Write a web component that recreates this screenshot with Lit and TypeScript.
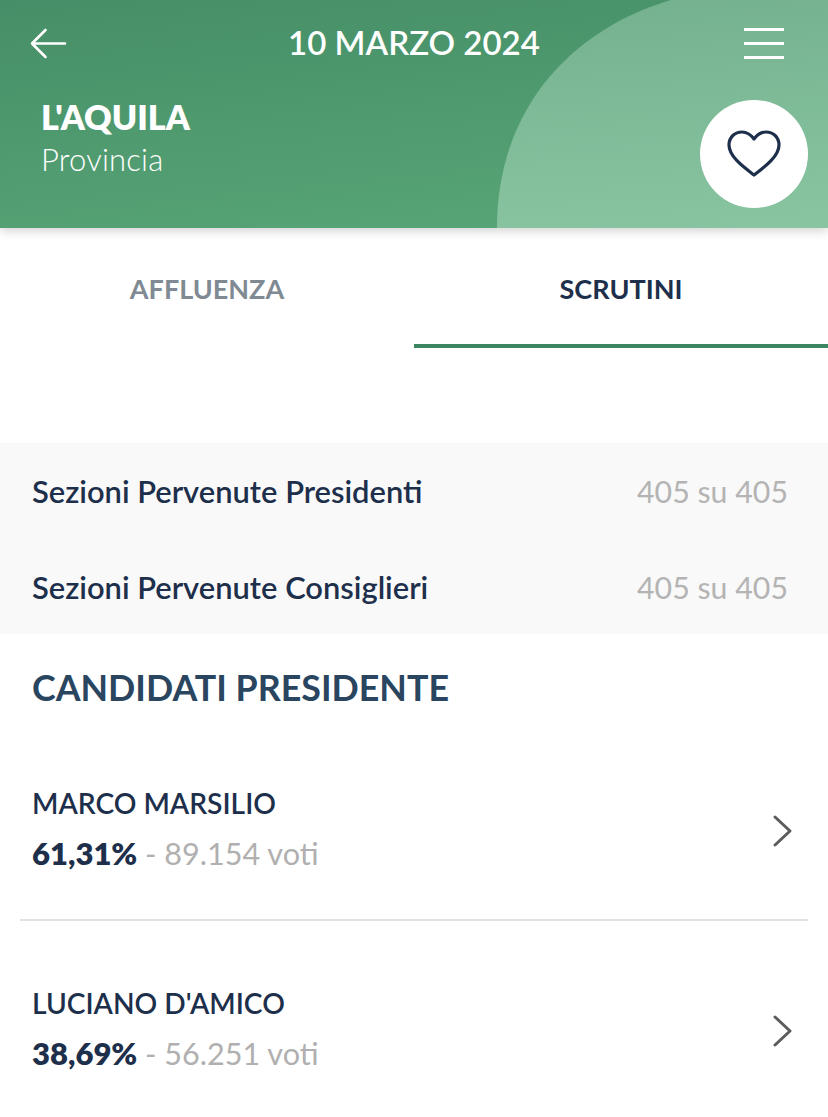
import { LitElement, html, css } from "lit";
import { customElement } from "lit/decorators.js";

const candidates = [
  { name: "MARCO MARSILIO", pct: "61,31%", votes: "89.154 voti" },
  { name: "LUCIANO D'AMICO", pct: "38,69%", votes: "56.251 voti" },
];

@customElement("app-root")
export class AppRoot extends LitElement {
  static styles = css`
    :host { display: block; width: 828px; height: 1117px; overflow: hidden; background: #fff; font-family: "Lato", "Noto Sans", sans-serif; color: #1d2f4b; }
    .header { position: relative; height: 228px; background: linear-gradient(174deg, #468e67, #59a778); box-shadow: 0 3px 10px rgba(0,0,0,.18); color: #fff; overflow: hidden; box-sizing: border-box; padding: 20px 44px 0 44px; }
    .blob { position: absolute; inset: 0; width: 828px; height: 228px; }
    .top { position: relative; display: grid; grid-template-columns: 1fr auto 1fr; align-items: center; height: 46px; }
    .back { width: 37px; height: 31px; display: block; margin-left: -14px; }
    .date { font-size: 33px; font-weight: 600; line-height: 46px; white-space: nowrap; margin-top: -2px; }
    .menu { justify-self: end; width: 40px; height: 31px; display: flex; flex-direction: column; justify-content: space-between; }
    .menu i { display: block; height: 3px; background: #fff; }
    .place { position: relative; margin: 30px 0 0 -3px; }
    .place b { display: block; font-size: 34px; line-height: 42px; font-weight: 800; }
    .place span { display: block; font-size: 31px; line-height: 42px; font-weight: 300; letter-spacing: .2px; }
    .fav { position: absolute; left: 700px; top: 100px; width: 108px; height: 108px; border-radius: 50%; background: #fff; display: flex; align-items: center; justify-content: center; }
    .fav svg { width: 54px; height: 48px; display: block; }
    .tabs { display: grid; grid-template-columns: 1fr 1fr; height: 120px; }
    .tab { display: flex; align-items: center; justify-content: center; font-size: 27px; font-weight: 700; color: #808a93; box-sizing: border-box; padding-top: 4px; border-bottom: 4px solid transparent; }
    .tab.on { color: #1d2f4b; border-bottom-color: #3b8560; }
    .info { margin-top: 95px; background: #f9f9f9; height: 191px; box-sizing: border-box; padding: 0 40px 0 32px; }
    .row { display: flex; justify-content: space-between; align-items: center; height: 96px; font-size: 30.9px; font-weight: 600; color: #1d2f4b; }
    .row span { font-size: 30.3px; font-weight: 400; color: #b4b4b4; }
    h2 { margin: 0; padding: 34px 32px 13px; font-size: 35.8px; font-weight: 700; line-height: 40px; color: #2a4560; white-space: nowrap; }
    .cand { display: flex; align-items: center; justify-content: space-between; margin: 0 20px; padding: 57px 14px 40px 12px; border-bottom: 2px solid #e2e2e2; }
    .cand:last-child { border-bottom: 0; }
    .n { display: block; font-size: 28.2px; line-height: 50px; font-weight: 600; color: #1d2f4b; }
    .v { display: block; font-size: 30.6px; line-height: 50px; color: #b0b0b0; }
    .v b { font-weight: 800; color: #1d2f4b; font-size: 31px; }
    .chev { width: 22px; height: 34px; display: block; margin-top: 4px; }
  `;

  render() {
    return html`
      <div class="header">
        <svg class="blob" viewBox="0 0 828 228">
          <defs>
            <linearGradient id="b" x1="0" y1="0" x2="0" y2="1">
              <stop offset="0" stop-color="#d0f1dd" stop-opacity=".32"></stop>
              <stop offset="1" stop-color="#d0f1dd" stop-opacity=".4"></stop>
            </linearGradient>
          </defs>
          <path d="M671 0C570 30 497 110 497 228L828 228L828 0Z" fill="url(#b)"></path>
        </svg>
        <div class="top">
          <svg class="back" viewBox="0 0 37 31" fill="none" stroke="#fff" stroke-width="2.6" stroke-linecap="round" stroke-linejoin="round">
            <path d="M35 15.5H2M15.5 2L2 15.5L15.5 29"></path>
          </svg>
          <div class="date">10 MARZO 2024</div>
          <div class="menu"><i></i><i></i><i></i></div>
        </div>
        <div class="place"><b>L'AQUILA</b><span>Provincia</span></div>
        <div class="fav">
          <svg viewBox="0 0 54 48" fill="none" stroke="#1d2f4b" stroke-width="3.2" stroke-linejoin="round">
            <path d="M27 45C18 38 2 27 2 15C2 7 8 2 15 2C20 2 24 5 27 9C30 5 34 2 39 2C46 2 52 7 52 15C52 27 36 38 27 45Z"></path>
          </svg>
        </div>
      </div>
      <div class="tabs"><div class="tab">AFFLUENZA</div><div class="tab on">SCRUTINI</div></div>
      <div class="info">
        <div class="row">Sezioni Pervenute Presidenti<span>405 su 405</span></div>
        <div class="row">Sezioni Pervenute Consiglieri<span>405 su 405</span></div>
      </div>
      <h2>CANDIDATI PRESIDENTE</h2>
      <div class="list">
        ${candidates.map(c => html`
          <div class="cand">
            <div>
              <span class="n">${c.name}</span>
              <span class="v"><b>${c.pct}</b> - ${c.votes}</span>
            </div>
            <svg class="chev" viewBox="0 0 22 34" fill="none" stroke="#5c5c5c" stroke-width="3" stroke-linecap="round" stroke-linejoin="round"><path d="M3 3L18 17L3 31"></path></svg>
          </div>`)}
      </div>
    `;
  }
}
